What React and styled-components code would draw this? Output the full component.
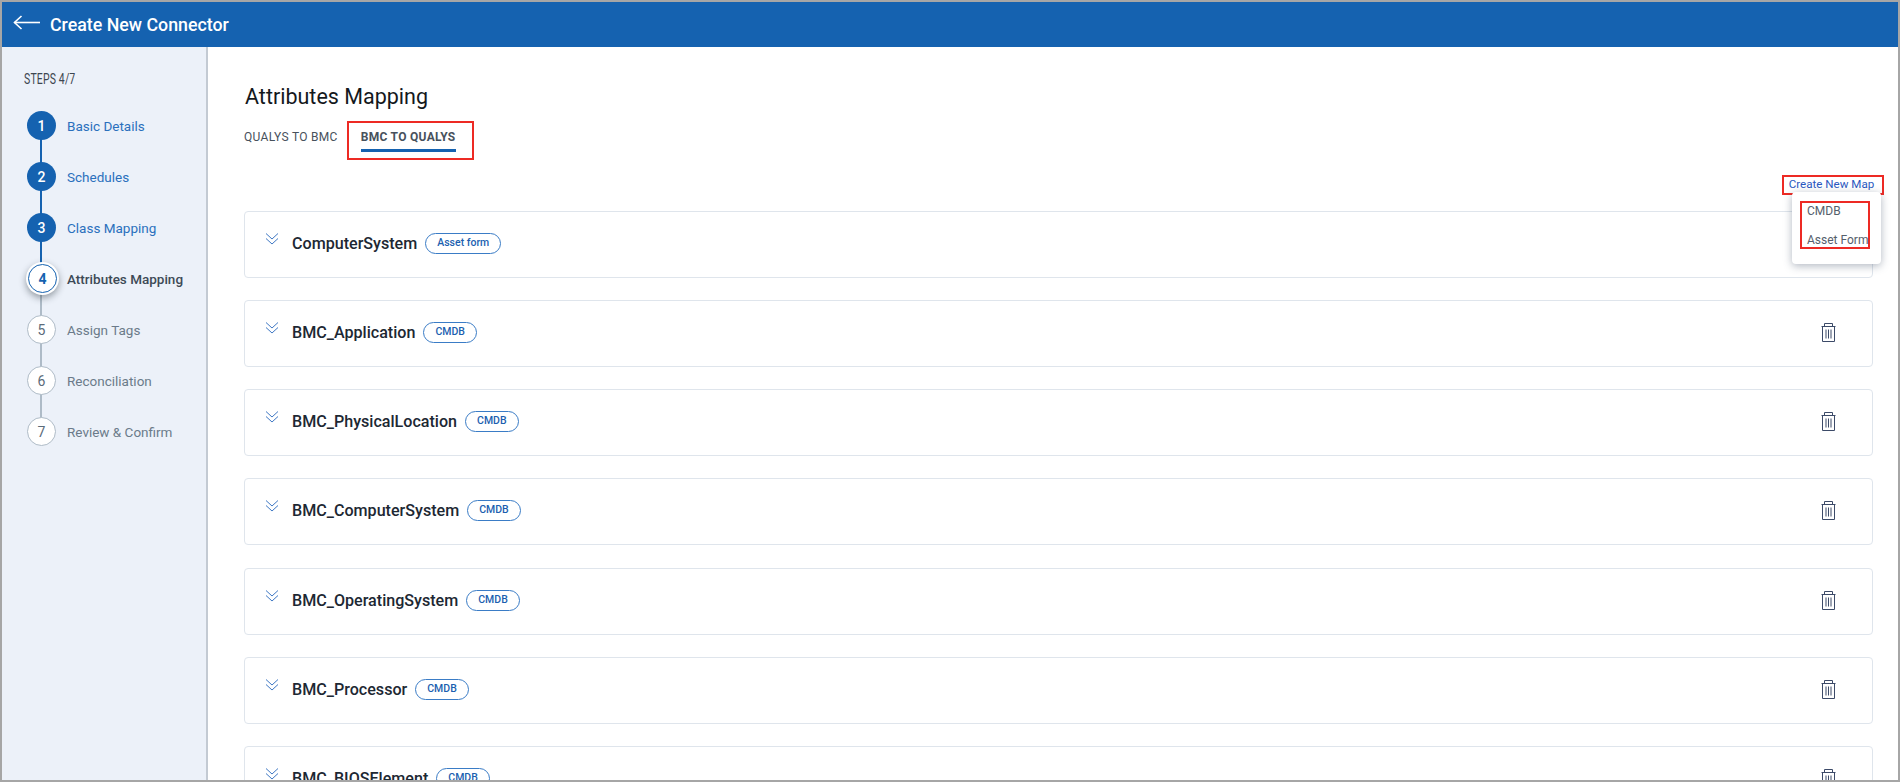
import React from "react";
import styled, { createGlobalStyle } from "styled-components";

const GlobalStyle = createGlobalStyle`
  html, body {
    margin: 0;
    padding: 0;
    height: 100%;
    overflow: hidden;
    background: #fff;
  }
  * {
    box-sizing: border-box;
  }
`;

const steps = [
  { label: "Basic Details", state: "done" },
  { label: "Schedules", state: "done" },
  { label: "Class Mapping", state: "done" },
  { label: "Attributes Mapping", state: "active" },
  { label: "Assign Tags", state: "todo" },
  { label: "Reconciliation", state: "todo" },
  { label: "Review & Confirm", state: "todo" },
];

const maps = [
  { name: "ComputerSystem", chip: "Asset form" },
  { name: "BMC_Application", chip: "CMDB" },
  { name: "BMC_PhysicalLocation", chip: "CMDB" },
  { name: "BMC_ComputerSystem", chip: "CMDB" },
  { name: "BMC_OperatingSystem", chip: "CMDB" },
  { name: "BMC_Processor", chip: "CMDB" },
  { name: "BMC_BIOSElement", chip: "CMDB" },
];

function BackArrow() {
  return (
    <svg width="28" height="16" viewBox="0 0 28 16" fill="none" stroke="#fff" strokeWidth="1.6">
      <path d="M1.5 7.5H27" />
      <path d="M8.5 1L1.5 7.5L8.5 14" />
    </svg>
  );
}

function DoubleChevron() {
  return (
    <svg width="14" height="14" viewBox="0 0 14 14" fill="none" stroke="#3f78c4" strokeWidth="1">
      <path d="M1 1.5L7 7L13 1.5" />
      <path d="M1 6.5L7 12L13 6.5" />
    </svg>
  );
}

function TrashIcon() {
  return (
    <svg width="15" height="19" viewBox="0 0 15 19" fill="none" stroke="#3c4a68" strokeWidth="1">
      <path d="M0.5 3.5H14.5" />
      <path d="M3.5 3.5V0.5H11.5V3.5" />
      <path d="M1.5 3.5V18.5H13.5V3.5" />
      <path d="M5 6.5V15.5M7.5 6.5V15.5M10 6.5V15.5" />
    </svg>
  );
}

export default function App() {
  return (
    <Frame>
      <GlobalStyle />
      <Header>
        <BackArrow />
        <HeaderTitle>Create New Connector</HeaderTitle>
      </Header>
      <Body>
        <Sidebar>
          <StepsLabel>STEPS 4/7</StepsLabel>
          <StepList>
            {steps.map((step, i) => (
              <Step key={step.label} $state={step.state} $last={i === steps.length - 1}>
                <StepDot $state={step.state}>{i + 1}</StepDot>
                <StepName $state={step.state}>{step.label}</StepName>
              </Step>
            ))}
          </StepList>
        </Sidebar>
        <Main>
          <Title>Attributes Mapping</Title>
          <Tabs>
            <Tab>QUALYS TO BMC</Tab>
            <Tab $active>BMC TO QUALYS</Tab>
          </Tabs>
          <Actions>
            <CreateLink>Create New Map</CreateLink>
            <Menu>
              <MenuItems>
                <MenuItem>CMDB</MenuItem>
                <MenuItem>Asset Form</MenuItem>
              </MenuItems>
            </Menu>
          </Actions>
          <CardList>
            {maps.map((m) => (
              <Card key={m.name}>
                <Toggle>
                  <DoubleChevron />
                </Toggle>
                <CardName>{m.name}</CardName>
                <Chip>{m.chip}</Chip>
                <Trash>
                  <TrashIcon />
                </Trash>
              </Card>
            ))}
          </CardList>
        </Main>
      </Body>
    </Frame>
  );
}

const Frame = styled.div`
  width: 1900px;
  height: 782px;
  border: 2px solid #a6a6a6;
  display: flex;
  flex-direction: column;
  overflow: hidden;
  font-family: Roboto, "Liberation Sans", sans-serif;
  background: #fff;
`;

const Header = styled.header`
  flex: none;
  height: 45px;
  background: #1562b0;
  display: flex;
  align-items: center;
  gap: 9px;
  padding: 0 0 4px 11px;
`;

const HeaderTitle = styled.h1`
  margin: 0;
  font-size: 17.8px;
  font-weight: 500;
  color: #fff;
  position: relative;
  top: 2px;
`;

const Body = styled.div`
  flex: 1;
  display: flex;
  min-height: 0;
`;

const Sidebar = styled.aside`
  flex: none;
  width: 206px;
  background: #ecf1f9;
  border-right: 2px solid #c3cad3;
  padding: 24px 0 0 22px;
`;

const StepsLabel = styled.div`
  font-size: 14px;
  line-height: 16px;
  color: #3d4650;
  transform: scaleX(0.75);
  transform-origin: left center;
  letter-spacing: 0.2px;
`;

const StepList = styled.ol`
  list-style: none;
  margin: 13px 0 0;
  padding: 0;
`;

const Step = styled.li`
  position: relative;
  height: 51px;
  display: flex;
  align-items: center;
  gap: 11px;
  padding-left: 3px;

  &::after {
    content: "";
    display: ${(p) => (p.$last ? "none" : "block")};
    position: absolute;
    left: 16px;
    top: 36px;
    width: 2px;
    height: 30px;
    background: ${(p) => (p.$state === "done" ? "#1562b0" : "#aebbc7")};
  }
`;

const StepDot = styled.span`
  position: relative;
  z-index: 1;
  flex: none;
  width: 29px;
  height: 29px;
  border-radius: 50%;
  display: flex;
  align-items: center;
  justify-content: center;
  font-size: 14px;
  ${(p) =>
    p.$state === "done" &&
    `background: #1562b0; color: #fff; font-weight: 500;`}
  ${(p) =>
    p.$state === "todo" &&
    `background: #fff; color: #5b6b7a; border: 1px solid #aebbc7;`}
  ${(p) =>
    p.$state === "active" &&
    `background: #fff; color: #1562b0; font-weight: 700; border: 1px solid #1562b0;
     left: 1px;
     box-shadow: 0 0 0 2px #fff, 0 3px 7px 2px rgba(40, 50, 60, 0.45);`}
`;

const StepName = styled.span`
  font-size: 13.5px;
  color: ${(p) =>
    p.$state === "done" ? "#2a70bd" : p.$state === "active" ? "#3d4a56" : "#6b7b8a"};
  font-weight: ${(p) => (p.$state === "active" ? 500 : 400)};
`;

const Main = styled.main`
  position: relative;
  flex: 1;
  min-width: 0;
  padding: 32px 25px 0 36px;
  overflow: hidden;
`;

const Title = styled.h2`
  margin: 0 0 0 1px;
  font-size: 21.5px;
  line-height: 36px;
  font-weight: 400;
  color: #14181c;
`;

const Tabs = styled.div`
  display: flex;
  gap: 23px;
  margin-top: 12px;
`;

const Tab = styled.button`
  position: relative;
  border: 0;
  background: none;
  padding: 0;
  height: 25px;
  font-family: inherit;
  font-size: 12px;
  letter-spacing: 0.3px;
  color: #47515c;
  font-weight: ${(p) => (p.$active ? 700 : 400)};
  padding-bottom: 3px;
  border-bottom: ${(p) => (p.$active ? "3px solid #1562b0" : "3px solid transparent")};

  ${(p) =>
    p.$active &&
    `&::after {
      content: "";
      position: absolute;
      left: -14px;
      right: -18px;
      top: -6px;
      bottom: -11px;
      border: 2px solid #ed2a24;
    }`}
`;

const Actions = styled.div`
  display: flex;
  justify-content: flex-end;
  height: 20px;
  margin-top: 23px;
  position: relative;
  z-index: 2;
`;

const CreateLink = styled.a`
  height: 20px;
  width: 102px;
  margin-right: -11px;
  padding-right: 3px;
  border: 2px solid #ed2a24;
  background: #fff;
  color: #2a58c0;
  font-size: 11.6px;
  line-height: 14px;
  text-align: center;
`;

const Menu = styled.div`
  position: absolute;
  right: -8px;
  top: 17px;
  width: 89px;
  height: 72px;
  background: #fff;
  border-radius: 4px;
  box-shadow: 0 2px 8px rgba(60, 75, 100, 0.4);
  padding: 10px 0 0 8px;
`;

const MenuItems = styled.div`
  width: 70px;
  height: 48px;
  border: 2px solid #ed2a24;
  margin-top: -1px;
  padding-left: 5px;
`;

const MenuItem = styled.div`
  font-size: 12px;
  line-height: 16px;
  color: #55606c;
  margin-bottom: 13px;
  white-space: nowrap;
`;

const CardList = styled.div`
  display: flex;
  flex-direction: column;
  gap: 22.33px;
  margin-top: 15.5px;
`;

const Card = styled.section`
  flex: none;
  height: 67px;
  border: 1px solid #dfe5ec;
  border-radius: 4px;
  display: flex;
  align-items: flex-start;
  padding: 21px 0 0 20px;
  background: #fff;
`;

const Toggle = styled.span`
  flex: none;
  width: 27px;
  display: flex;
  margin-top: -1px;
`;

const CardName = styled.span`
  font-size: 16.1px;
  line-height: 21px;
  font-weight: 500;
  color: #1d2833;
`;

const Chip = styled.span`
  margin-left: 8px;
  height: 21px;
  padding: 0 11px;
  border: 1px solid #3a7cc6;
  border-radius: 11px;
  font-size: 10.5px;
  line-height: 18px;
  font-weight: 500;
  color: #1c5fb0;
`;

const Trash = styled.span`
  margin-left: auto;
  margin-right: 36px;
  margin-top: 1px;
  display: flex;
`;
